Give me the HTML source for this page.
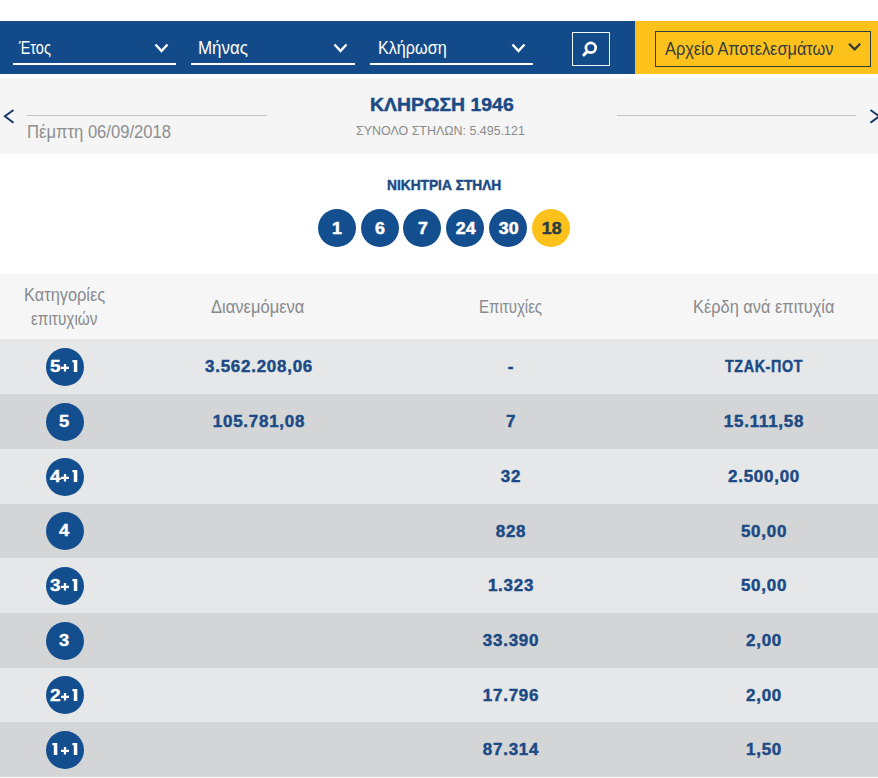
<!DOCTYPE html>
<html><head><meta charset="utf-8">
<style>
*{margin:0;padding:0;box-sizing:border-box}
html,body{width:878px;height:778px;overflow:hidden;background:#fff;font-family:"Liberation Sans",sans-serif}
.a{position:absolute}
.t{position:absolute;white-space:nowrap;line-height:1;transform-origin:0 0}
#nav{left:0;top:21px;width:635px;height:53px;background:#134b8a}
#nav2{left:635px;top:21px;width:243px;height:53px;background:#fcc21b}
.ul{position:absolute;top:63px;height:2px;background:#fff}
#band{left:0;top:78px;width:878px;height:76px;background:#f5f5f5}
.hline{position:absolute;top:115px;height:1px;background:#c4c4c4}
#thead{left:0;top:274px;width:878px;height:65px;background:#f6f6f6}
.row{position:absolute;left:0;width:878px;height:54.8px}
.r1{background:#e6e7e9}
.r2{background:#d4d5d7}
.v{color:#1b4a85;font-size:15.7px;font-weight:bold;letter-spacing:0.7px;-webkit-text-stroke:0.45px #1b4a85;transform-origin:50% 50%;transform:translateX(-50%) scaleX(1.08)}
.ball{position:absolute;top:209px;width:38px;height:38px;border-radius:50%;background:#134e8e;color:#fff;font-weight:bold;font-size:16.8px;display:flex;align-items:center;justify-content:center}
.ball span{display:block;-webkit-text-stroke:0.5px currentColor;transform:translate(0.4px,1px) scaleX(1.06)}
.cat{position:absolute;left:46px;width:38px;height:38px;border-radius:50%;background:#134e8e;color:#fff;font-weight:bold;font-size:17px;display:flex;align-items:center;justify-content:center}
.cat .d{display:block;-webkit-text-stroke:0.35px #fff;transform:translate(-0.5px,-0.4px) scaleX(1.08)}
.cat .dl{position:absolute;left:3.6px;top:10.6px;line-height:1;transform:scaleX(1.12);transform-origin:0 0}
.cat .pl{position:absolute;left:15.1px;top:16.7px}
.cat .one{position:absolute;left:25.9px;top:12.9px}
</style></head><body>
<div class="a" id="nav"></div>
<div class="a" id="nav2"></div>
<div class="ul" style="left:13px;width:163px"></div>
<div class="ul" style="left:191px;width:164px"></div>
<div class="ul" style="left:370px;width:163px"></div>
<svg class="a" style="left:154px;top:43px" width="15" height="10" viewBox="0 0 15 10"><path d="M1.5 1.5 L7.5 8 L13.5 1.5" fill="none" stroke="#fff" stroke-width="2.4"/></svg>
<svg class="a" style="left:333px;top:43px" width="15" height="10" viewBox="0 0 15 10"><path d="M1.5 1.5 L7.5 8 L13.5 1.5" fill="none" stroke="#fff" stroke-width="2.4"/></svg>
<svg class="a" style="left:511px;top:43px" width="15" height="10" viewBox="0 0 15 10"><path d="M1.5 1.5 L7.5 8 L13.5 1.5" fill="none" stroke="#fff" stroke-width="2.4"/></svg>
<div class="a" style="left:572px;top:32px;width:38px;height:34px;border:1.5px solid #f2fbff"></div>
<svg class="a" style="left:572px;top:32px" width="38" height="34" viewBox="0 0 38 34"><circle cx="18.8" cy="15.8" r="4.9" fill="none" stroke="#fff" stroke-width="2.7"/><path d="M15.3 19.5 L11.9 22.9" stroke="#fff" stroke-width="3" stroke-linecap="round"/></svg>
<div class="a" style="left:655px;top:31px;width:216px;height:36px;border:1.5px solid #333a3a"></div>
<svg class="a" style="left:847px;top:42px" width="15" height="10" viewBox="0 0 15 10"><path d="M2 1.8 L7.6 7.4 L13.2 1.8" fill="none" stroke="#343a3a" stroke-width="2.3"/></svg>
<div class="a" id="band"></div>
<div class="hline" style="left:27px;width:240px"></div>
<div class="hline" style="left:617px;width:239px"></div>
<svg class="a" style="left:3px;top:108px" width="12" height="16" viewBox="0 0 12 16"><path d="M10.5 2 L1.9 8.3 L10.5 14.7" fill="none" stroke="#163a66" stroke-width="2"/></svg>
<svg class="a" style="left:868px;top:108px" width="12" height="16" viewBox="0 0 12 16"><path d="M2.5 2 L11.1 8.3 L2.5 14.7" fill="none" stroke="#163a66" stroke-width="2"/></svg>
<div class="a" id="thead"></div>
<div class="row r1" style="top:339px;height:55px"></div>
<div class="row r2" style="top:394px;height:55px"></div>
<div class="row r1" style="top:449px;height:55px"></div>
<div class="row r2" style="top:504px;height:54px"></div>
<div class="row r1" style="top:558px;height:55px"></div>
<div class="row r2" style="top:613px;height:55px"></div>
<div class="row r1" style="top:668px;height:54px"></div>
<div class="row r2" style="top:722px;height:55px"></div>
<div class="ball" style="left:318.0px"><span>1</span></div>
<div class="ball" style="left:360.6px"><span>6</span></div>
<div class="ball" style="left:403.4px"><span>7</span></div>
<div class="ball" style="left:446.0px"><span>24</span></div>
<div class="ball" style="left:489.0px"><span>30</span></div>
<div class="ball" style="left:532.1px;background:#fcc21b;color:#2b3c46"><span>18</span></div>
<div class="cat" style="top:347.50px"><span class="d dl">5</span><svg class="pl" width="8" height="8" viewBox="0 0 8 8"><path d="M4 0 V7.6 M0 3.8 H8" stroke="#fff" stroke-width="2.3"/></svg><svg class="one" width="6" height="12" viewBox="0 0 6 12"><path d="M0.4 0 H5.3 V12 H1.8 V2.2 H0.4 Z" fill="#fff"/></svg></div>
<div class="cat" style="top:402.50px"><span class="d">5</span></div>
<div class="cat" style="top:457.50px"><span class="d dl">4</span><svg class="pl" width="8" height="8" viewBox="0 0 8 8"><path d="M4 0 V7.6 M0 3.8 H8" stroke="#fff" stroke-width="2.3"/></svg><svg class="one" width="6" height="12" viewBox="0 0 6 12"><path d="M0.4 0 H5.3 V12 H1.8 V2.2 H0.4 Z" fill="#fff"/></svg></div>
<div class="cat" style="top:512.00px"><span class="d">4</span></div>
<div class="cat" style="top:566.50px"><span class="d dl">3</span><svg class="pl" width="8" height="8" viewBox="0 0 8 8"><path d="M4 0 V7.6 M0 3.8 H8" stroke="#fff" stroke-width="2.3"/></svg><svg class="one" width="6" height="12" viewBox="0 0 6 12"><path d="M0.4 0 H5.3 V12 H1.8 V2.2 H0.4 Z" fill="#fff"/></svg></div>
<div class="cat" style="top:621.50px"><span class="d">3</span></div>
<div class="cat" style="top:676.00px"><span class="d dl">2</span><svg class="pl" width="8" height="8" viewBox="0 0 8 8"><path d="M4 0 V7.6 M0 3.8 H8" stroke="#fff" stroke-width="2.3"/></svg><svg class="one" width="6" height="12" viewBox="0 0 6 12"><path d="M0.4 0 H5.3 V12 H1.8 V2.2 H0.4 Z" fill="#fff"/></svg></div>
<div class="cat" style="top:730.50px"><svg class="one" style="left:5.8px" width="6" height="12" viewBox="0 0 6 12"><path d="M0.4 0 H5.3 V12 H1.8 V2.2 H0.4 Z" fill="#fff"/></svg><svg class="pl" width="8" height="8" viewBox="0 0 8 8"><path d="M4 0 V7.6 M0 3.8 H8" stroke="#fff" stroke-width="2.3"/></svg><svg class="one" width="6" height="12" viewBox="0 0 6 12"><path d="M0.4 0 H5.3 V12 H1.8 V2.2 H0.4 Z" fill="#fff"/></svg></div>
<div class="t" style="left:19.23px;top:37.78px;font-size:19.04px;font-weight:normal;color:#fff;transform:scaleX(0.760)">Έτος</div>
<div class="t" style="left:198.38px;top:39.49px;font-size:18.31px;font-weight:normal;color:#fff;transform:scaleX(0.926)">Μήνας</div>
<div class="t" style="left:377.83px;top:39.32px;font-size:18.46px;font-weight:normal;color:#fff;transform:scaleX(0.877)">Κλήρωση</div>
<div class="t" style="left:665.00px;top:39.62px;font-size:18.17px;font-weight:normal;color:#353b3c;transform:scaleX(0.900)">Αρχείο Αποτελεσμάτων</div>
<div class="t" style="left:26.70px;top:124.39px;font-size:17.73px;font-weight:normal;color:#8e8e8e;transform:scaleX(0.938)">Πέμπτη 06/09/2018</div>
<div class="t" style="left:370.09px;top:96.37px;font-size:18.75px;font-weight:bold;color:#1b4a85;transform:scaleX(1.035);-webkit-text-stroke:0.45px #1b4a85">ΚΛΗΡΩΣΗ 1946</div>
<div class="t" style="left:356.42px;top:123.78px;font-size:13.37px;font-weight:normal;color:#8a8a8a;transform:scaleX(0.932)">ΣΥΝΟΛΟ ΣΤΗΛΩΝ: 5.495.121</div>
<div class="t" style="left:387.24px;top:179.39px;font-size:13.95px;font-weight:bold;color:#1b4a85;transform:scaleX(0.985);-webkit-text-stroke:0.45px #1b4a85">ΝΙΚΗΤΡΙΑ ΣΤΗΛΗ</div>
<div class="t" style="left:23.52px;top:285.57px;font-size:18.46px;font-weight:normal;color:#878a8e;transform:scaleX(0.888)">Κατηγορίες</div>
<div class="t" style="left:31.42px;top:310.12px;font-size:18.46px;font-weight:normal;color:#878a8e;transform:scaleX(0.833)">επιτυχιών</div>
<div class="t" style="left:211.34px;top:299.21px;font-size:17.88px;font-weight:normal;color:#878a8e;transform:scaleX(0.926)">Διανεμόμενα</div>
<div class="t" style="left:479.12px;top:297.87px;font-size:18.17px;font-weight:normal;color:#878a8e;transform:scaleX(0.828)">Επιτυχίες</div>
<div class="t" style="left:692.62px;top:298.99px;font-size:17.73px;font-weight:normal;color:#878a8e;transform:scaleX(0.925)">Κέρδη ανά επιτυχία</div>
<div class="t v" style="left:258.5px;top:358.81px">3.562.208,06</div>
<div class="t v" style="left:511.2px;top:358.81px">-</div>
<div class="t v" style="left:764.0px;top:358.81px;transform:translateX(-50%) scaleX(0.91)">ΤΖΑΚ-ΠΟΤ</div>
<div class="t v" style="left:258.5px;top:413.81px">105.781,08</div>
<div class="t v" style="left:511.2px;top:413.81px">7</div>
<div class="t v" style="left:764.0px;top:413.81px">15.111,58</div>
<div class="t v" style="left:511.2px;top:468.81px">32</div>
<div class="t v" style="left:764.0px;top:468.81px">2.500,00</div>
<div class="t v" style="left:511.2px;top:523.81px">828</div>
<div class="t v" style="left:764.0px;top:523.81px">50,00</div>
<div class="t v" style="left:511.2px;top:577.81px">1.323</div>
<div class="t v" style="left:764.0px;top:577.81px">50,00</div>
<div class="t v" style="left:511.2px;top:632.81px">33.390</div>
<div class="t v" style="left:764.0px;top:632.81px">2,00</div>
<div class="t v" style="left:511.2px;top:687.81px">17.796</div>
<div class="t v" style="left:764.0px;top:687.81px">2,00</div>
<div class="t v" style="left:511.2px;top:741.81px">87.314</div>
<div class="t v" style="left:764.0px;top:741.81px">1,50</div>
</body></html>
